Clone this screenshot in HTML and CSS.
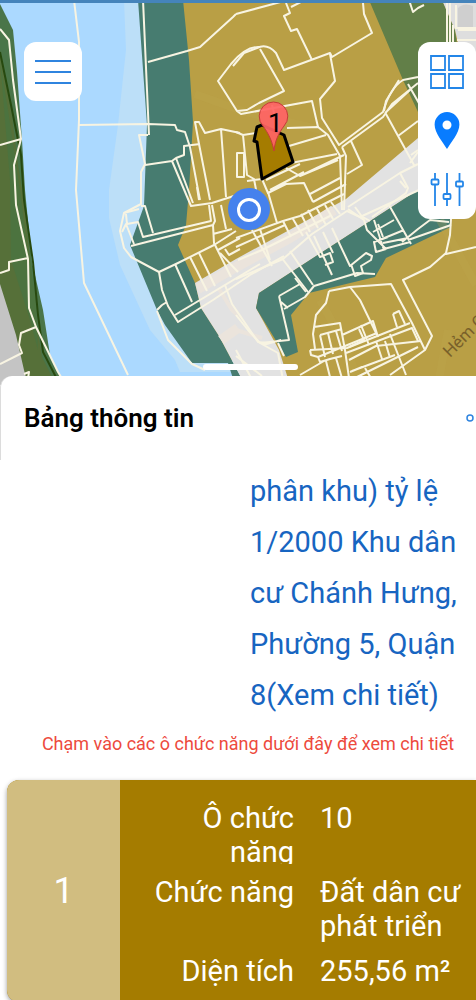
FILE: index.html
```
<!DOCTYPE html>
<html lang="vi">
<head>
    <meta charset="UTF-8">
    <meta name="viewport" content="width=device-width, initial-scale=1.0">
    <title>Bảng thông tin</title>
    <link rel="stylesheet" href="styles.css">
</head>
<body>
    <div class="map">
        <svg class="map-canvas" viewBox="0 0 476 385" preserveAspectRatio="xMidYMin slice" aria-hidden="true">
            <!-- land and water -->
            <rect width="476" height="385" fill="#b99f45"/>
            <path fill="#abd9ff" d="M0 0H142L148 120 144 206 130 245 157 310 192 360H240V385H0z"/>
            <path fill="#bcdff8" d="M124 0L126 50 118 125 109 190 109 218 120 265 150 330 175 360 180 372H240V360H200L160 300 140 245 155 200 150 0z"/>
            <path fill="#477c70" d="M138 0H183L189 60 193 122 189 190 186 225 178 245 195 283 201 308 219 336 245 385H235L228 363H192L165 325 157 310 130 245 144 206 147 125z"/>
            <path fill="#4a7549" d="M0 4L13 30 17 72 22 140 25 190 32 262 43 310 50 355 64 385H0z"/>
            <path fill="#567039" d="M0 55L12 115 18 165 24 200 30 260 36 320 42 357 56 385H0z"/>
            <path fill="#4c733f" d="M0 60L10 180 11 260 30 320 38 350 36 300 27 245 20 190 8 110z"/>
            <path fill="none" stroke="#27490f" stroke-width="2" d="M0 52L11 105 21 155 24 200 33 262 38 315 43 352 60 385"/>
            <path fill="#c4c4c4" d="M0 284L16 335 24 370 28 385H0z"/>
            <path fill="#e2e2e2" d="M195 283L236 259 346 199 418 138 476 96V160L418 190 259 293 256 308 279 350 290 385H245L219 336 201 308z"/>
            <path fill="none" stroke="#ebe4dc" stroke-width="10" d="M198 289L236 267 290 238 334 210M221 340L238 328"/>
            <path fill="none" stroke="#ebe4dc" stroke-width="4" d="M219 289L232 310 241 318M236 330L262 338"/>
            <path fill="#477c70" d="M259 293L418 190 450 219 451 227 386 258 375 277 309 293 291 315 298 352 286 357 256 308z"/>
            <path fill="#627f48" d="M369 0H442L455 30 462 80 476 100 476 104 418 112 403 80z"/>
            <path fill="#dedede" d="M442 0H476V60H462L455 30z"/>
            <path fill="#cfcfcf" d="M458 8Q464 2 473 6V27H458z"/>
            <path fill="none" stroke="#c0a750" stroke-width="8" opacity=".25" d="M195 94L245 112 330 132M320 300L345 345 360 385M440 220L476 285M438 385L448 330"/>

            <!-- parcel borders -->
            <g class="parcels">
                <path d="M0 29L9 40 13 80 21 139 14 165 16 205 28 259 29 308 36 327 58 372 66 385M0 145L21 139M0 273L9 270 9 262 28 258M36 327L21 333 19 345 22 353 0 364M27 385L29 372 24 374"/>
                <path d="M74 0L79 42 79 120 76 190 84 283 128 375M79 125L148 124 175 125 177 130 185 132 190 147 198 190 200 200M148 135L139 135 145 164 141 172 141 204 124 213 120 231 124 248 131 257 159 272 178 263 214 245 236 231"/>
                <path d="M143 0L149 135M148 62L187 51 200 47 233 17 236 14M145 165L172 161 191 206 212 203 240 194M172 161L176 158 193 203M176 158L184 155 184 146 200 144"/>
                <path d="M199 144L195 122 199 122 205 133 221 129 240 133M199 144L210 200M221 129L226 197M240 153H237V177H240M197 187L199 200"/>
                <path d="M141 206L145 206 153 233M124 213L139 209M126 214L127 224 138 222 143 237 211 221 209 205M131 246L213 225 215 221 212 205M122 232L126 224 134 244M221 205L226 229M213 234L232 229M213 225L214 243 231 277"/>
                <path d="M159 272L162 290 168 306 178 322 213 300 250 275 284 256M162 305L167 302M175 315L260 264M175 264L192 302M190 257L207 291M199 253L215 286M157 311L168 340 192 364 205 370M218 250L240 238M220 253L238 272M225 249L229 255 240 249M225 285L232 304 258 342 265 343M162 305L157 310"/>
                <path d="M236 14L288 0M286 3L290 13 284 16 291 31 297 29 312 60M291 7L305 0M363 3L364 14 372 33 332 57 330 53 284 70 276 53Q267 43 257 48L244 53 233 66M330 54L335 81 320 99 322 118 339 145 383 112Q390 88 403 80L418 77"/>
                <path d="M260 49L272 70 284 91 259 103 247 110 237 111 218 81 231 64Q246 46 260 47M237 111L241 114 312 101 318 127 328 135 340 156 342 210M272 105L276 121M289 146L326 135M291 163L337 154M287 128L319 127M286 168L300 176 338 160M300 176L344 155M266 180L300 164M236 132L243 135 247 175 254 179 257 195M243 135L256 133M238 153H244V177H238M247 181L262 179M262 179L268 193 286 184 304 183 313 202M270 190L304 172M310 194L340 178M313 202L346 184"/>
                <path d="M342 147L346 156 344 210M342 147L383 117 392 104 418 83M351 141L362 165 347 174M386 114L414 165M398 136L418 121M399 80L386 101 384 111M385 113L410 90M408 84L420 105M419 86L425 100M348 207L400 173 418 164M400 173L408 188 406 193 372 217M410 163L418 152M411 155L418 150M400 181L406 188"/>
                <path d="M409 0L413 12 418 8 424 5M447 0V42M450 0V42M453 25V42M455 28H476M458 30H476M457 40H476M456 5V28"/>
                <path d="M236 279L283 259 312 234 347 211 360 217 419 190M252 230L272 266M260 229L270 260M236 238L283 221 300 216 344 194M236 247L285 225M268 192L277 223M283 221L291 237M293 219L303 236M301 214L310 232M308 210L318 228M316 207L326 225M325 205L333 219M331 202L340 214M238 260L262 250 330 216"/>
                <path d="M281 257L308 292M290 251L313 285M306 232L320 257 330 253 333 262 325 265M314 236L332 275M323 232L333 253M332 228L350 266 366 253 372 256 371 260 361 266 363 273 355 276 351 264M348 209L364 220 367 230 386 249 376 252 374 242 388 237M389 205L411 244M374 220L384 250M373 232L394 220M377 241L404 230M383 243L408 238M384 249L410 242M378 224L383 237M355 207L363 218M361 216L370 221M402 242L418 229 430 220 449 222M408 240L451 225"/>
                <path d="M279 296L300 284M279 296L288 335 289 340 260 343 278 353 283 380M284 309L305 297 314 286 357 273 375 274M295 278L306 292M281 302L288 308M263 345L281 340M236 315L248 330 260 343M236 356L262 376M255 385L236 350M278 343L284 356"/>
                <path d="M451 219L450 235 446 253 430 267 403 280 432 336 425 350 390 375M446 254L476 247M329 291L350 287 391 284 412 323 425 350M329 291L326 303 316 315 313 334 315 349M350 287L360 300 377 335M314 327L340 323 345 350 350 385M393 314L399 311 405 324M393 314L397 327M320 335L342 329M320 335L325 357M328 333L333 354M336 331L342 351M342 335L373 321 378 337M349 347L364 340 359 329M361 325L369 345"/>
                <path d="M310 350L347 348 410 323M310 350L311 355 318 357 377 333M318 357L320 362 330 359 342 356M326 361L332 385M346 353L412 328 418 341M349 360L376 346 421 341M376 341L382 359M390 334L406 375M385 341L390 358M352 371L395 355M355 378L418 347M300 375L324 361M365 368L375 385M336 358L344 385M350 372L362 367"/>
            </g>
            <text class="street" transform="translate(450 358) rotate(-45)">Hẻm Câu</text>

            <!-- selected parcel -->
            <path fill="#a57c00" stroke="#000" stroke-width="3" stroke-linejoin="round" d="M257 127L262 125 284 135 293 162 262 179 257 142 254 141z"/>
            <path fill="#ff6464" fill-opacity=".93" stroke="#c43c3a" stroke-width="1" d="M274 151C272 140 268 133 263 126A14.300 14.300 0 1 1 284 126C279 133 275 140 274 151z"/>
            <text class="parcel-no" x="268" y="132">1</text>

            <circle cx="249" cy="209" r="21" fill="#4581ed"/>
            <circle cx="249" cy="210" r="10.500" fill="none" stroke="#fff" stroke-width="3"/>
        </svg>

        <button class="menu-btn" aria-label="Menu">
            <svg width="36" height="24" viewBox="0 0 36 24" fill="none" stroke="#2f84df" stroke-width="2">
                <path d="M0 1H36M0 12H36M0 23H36"/>
            </svg>
        </button>

        <div class="toolbar">
            <button aria-label="Lớp bản đồ">
                <svg width="34" height="34" viewBox="0 0 34 34" fill="none" stroke="#2386e8" stroke-width="1.800">
                    <path d="M1 1H15V15H1zM19 1H33V15H19zM1 19H15V33H1zM19 19H33V33H19z"/>
                </svg>
            </button>
            <button aria-label="Vị trí">
                <svg width="26" height="37" viewBox="0 0 26 37" fill="#087cff">
                    <path fill-rule="evenodd" d="M13 0A12.400 12.400 0 0 1 25.400 12.400C25.400 21 17 30 13 37 9 30 .6 21 .6 12.400A12.400 12.400 0 0 1 13 0zM13 8.500A4.500 4.500 0 1 0 13 17.500 4.500 4.500 0 1 0 13 8.500z"/>
                </svg>
            </button>
            <button aria-label="Tùy chỉnh">
                <svg width="34" height="34" viewBox="0 0 34 34" fill="none" stroke="#2386e8" stroke-width="1.800">
                    <path d="M5 0V6.500M5 11.500V33M17 0V21M17 26V33M29.500 0V8.500M29.500 13.500V33"/>
                    <rect x="1.500" y="6.500" width="7" height="5" rx="1"/>
                    <rect x="13.500" y="21" width="7" height="5" rx="1"/>
                    <rect x="26" y="8.500" width="7" height="5" rx="1"/>
                </svg>
            </button>
        </div>

        <div class="handle"></div>
    </div>

    <div class="sheet">
        <div class="sheet-header">
            <h2>Bảng thông tin</h2>
            <button class="more-btn" aria-label="Thêm">
                <svg width="8" height="8" viewBox="0 0 8 8" fill="none" stroke="#2f84df" stroke-width="1.500">
                    <circle cx="4" cy="4" r="3"/>
                </svg>
            </button>
        </div>

        <div class="plan">
            <a href="#">phân khu) tỷ lệ 1/2000 Khu dân cư Chánh Hưng, Phường 5, Quận 8(Xem chi tiết)</a>
        </div>

        <p class="hint">Chạm vào các ô chức năng dưới đây để xem chi tiết</p>

        <div class="card">
            <div class="card-number">1</div>
            <dl class="card-info">
                <dt class="cut">Ô chức năng</dt>
                <dd>10</dd>
                <dt>Chức năng</dt>
                <dd>Đất dân cư phát triển</dd>
                <dt>Diện tích</dt>
                <dd>255,56 m²</dd>
            </dl>
        </div>
    </div>
</body>
</html>
```
FILE: styles.css
```
* {
    box-sizing: border-box;
}
body {
    margin: 0;
    background: white;
    font-family: Roboto, "Noto Sans", sans-serif;
    overflow-x: hidden;
}
button {
    display: flex;
    align-items: center;
    justify-content: center;
    padding: 0;
    border: none;
    background: none;
    cursor: pointer;
}
.map {
    position: relative;
    height: 388px;
    border-top: 3px solid #4584bb;
    overflow: hidden;
}
.map-canvas {
    display: block;
    width: 100%;
    height: 100%;
    margin-top: -3px;
}
.parcels {
    fill: none;
    stroke: #f8f4e2;
    stroke-width: 2;
    stroke-linejoin: round;
}
.street {
    font-size: 17px;
    fill: #78602a;
}
.parcel-no {
    font-size: 26px;
    fill: black;
}
.menu-btn {
    position: absolute;
    top: 39px;
    left: 24px;
    width: 58px;
    height: 59px;
    border-radius: 12px;
    background: white;
}
.toolbar {
    position: absolute;
    top: 39px;
    right: 0;
    display: flex;
    flex-direction: column;
    width: 58px;
    height: 177px;
    border-radius: 12px;
    background: white;
}
.toolbar button {
    height: 59px;
}
.handle {
    position: absolute;
    left: calc(50% - 35px);
    bottom: 18px;
    width: 95px;
    height: 6px;
    border-radius: 3px;
    background: white;
}
.sheet {
    position: relative;
    margin-top: -12px;
}
.sheet-header {
    display: flex;
    align-items: center;
    justify-content: space-between;
    height: 84px;
    padding: 0 2px 0 23px;
    border-left: 1px solid #dcdcdc;
    border-top-left-radius: 12px;
    background: white;
}
.sheet-header h2 {
    margin: 0;
    font-size: 26px;
    font-weight: 600;
    color: black;
}
.plan {
    padding: 6px 0 0 250px;
}
.plan a {
    display: block;
    font-size: 29px;
    line-height: 51px;
    color: #1765c1;
    text-decoration: none;
}
.hint {
    margin: 0;
    padding: 11px 0 24px 20px;
    text-align: center;
    font-size: 18px;
    line-height: 24px;
    color: #ed4a3d;
}
.card {
    display: flex;
    margin-left: 7px;
    border-radius: 12px 0 0 12px;
    background: #a57c00;
    color: white;
    overflow: hidden;
    box-shadow: 0 2px 5px rgba(0, 0, 0, 0.4);
}
.card-number {
    display: flex;
    align-items: center;
    justify-content: center;
    width: 113px;
    background: #d1bd80;
    font-size: 36px;
}
.card-info {
    flex: 1;
    display: grid;
    grid-template-columns: 174px 1fr;
    column-gap: 26px;
    row-gap: 11px;
    margin: 0;
    padding: 21px 0 14px;
    font-size: 29px;
    line-height: 34px;
}
.card-info dt {
    padding-left: 24px;
    text-align: right;
}
.card-info dt.cut {
    height: 63px;
    padding-left: 60px;
    overflow: hidden;
}
.card-info dd {
    margin: 0;
}
```
